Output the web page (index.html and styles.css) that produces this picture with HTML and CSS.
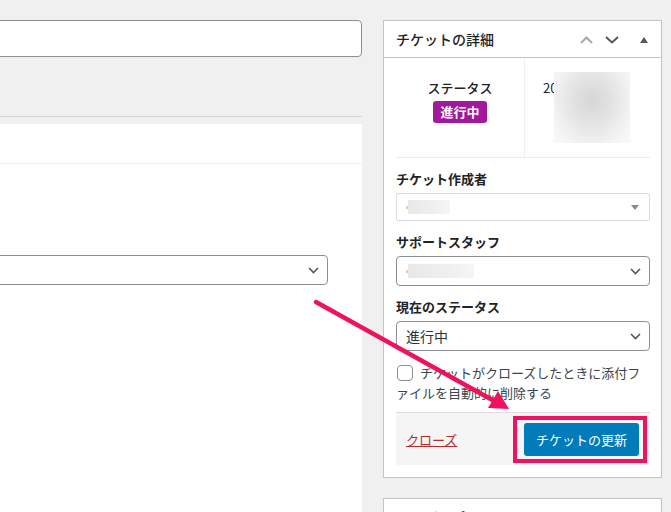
FILE: index.html
```html
<!DOCTYPE html>
<html lang="ja">
<head>
  <meta charset="UTF-8" />
  <meta name="viewport" content="width=device-width, initial-scale=1" />
  <title>チケットの詳細</title>
  <link rel="stylesheet" href="styles.css">
</head>
<body>
  <div class="layout">
    <div class="main-col">
      <div class="title-input"></div>
      <hr class="sep">
      <div class="panel">
        <div class="panel-head"></div>
        <div class="panel-body">
          <div class="select">
            <span></span>
            <svg class="chev" width="11" height="7" viewBox="0 0 11 7"><polyline points="1,1 5.5,5.5 10,1" fill="none" stroke="#50575e" stroke-width="1.6"/></svg>
          </div>
        </div>
      </div>
    </div>

    <div class="side-col">
      <div class="postbox">
        <div class="postbox-head">
          <h2>チケットの詳細</h2>
          <div class="head-tools">
            <svg width="13" height="8" viewBox="0 0 13 8"><polyline points="1,7 6.5,1.5 12,7" fill="none" stroke="#a7aaad" stroke-width="2"/></svg>
            <svg width="14" height="8" viewBox="0 0 14 8"><polyline points="1,1 7,6.5 13,1" fill="none" stroke="#50575e" stroke-width="2"/></svg>
            <svg class="toggle" width="8" height="6" viewBox="0 0 8 6"><polygon points="0,6 4,0 8,6" fill="#50575e"/></svg>
          </div>
        </div>
        <div class="postbox-inside">
          <div class="status-grid">
            <div class="status-cell">
              <div>ステータス</div>
              <span class="badge">進行中</span>
            </div>
            <div class="date-cell">
              <span class="date-text">20</span>
              <span class="blurred"></span>
            </div>
          </div>

          <div class="field">
            <label>チケット作成者</label>
            <div class="select select-light">
              <span class="dot"></span><span class="blur-name short"></span>
              <svg class="tri" width="8" height="5" viewBox="0 0 8 5"><polygon points="0,0 8,0 4,5" fill="#888"/></svg>
            </div>
          </div>

          <div class="field">
            <label>サポートスタッフ</label>
            <div class="select">
              <span class="dot"></span><span class="blur-name"></span>
              <svg class="chev" width="11" height="7" viewBox="0 0 11 7"><polyline points="1,1 5.5,5.5 10,1" fill="none" stroke="#50575e" stroke-width="1.6"/></svg>
            </div>
          </div>

          <div class="field">
            <label>現在のステータス</label>
            <div class="select">
              <span class="select-text">進行中</span>
              <svg class="chev" width="11" height="7" viewBox="0 0 11 7"><polyline points="1,1 5.5,5.5 10,1" fill="none" stroke="#50575e" stroke-width="1.6"/></svg>
            </div>
          </div>

          <p class="check-row"><span class="checkbox"></span>チケットがクローズしたときに添付ファイルを自動的に削除する</p>

          <div class="box-footer">
            <a href="#" class="close-link">クローズ</a>
            <span class="highlight"><button class="btn-primary">チケットの更新</button></span>
          </div>
        </div>
      </div>

      <div class="postbox">
        <div class="postbox-head">
          <h2>ユーザープロフィール</h2>
        </div>
      </div>
    </div>
  </div>

  <!-- annotation arrow -->
  <svg class="annot" width="671" height="512" viewBox="0 0 671 512">
    <line x1="316" y1="302" x2="496" y2="402" stroke="#ee1260" stroke-width="4.5" stroke-linecap="round"/>
    <polygon points="509,409 488,408 498,391" fill="#ee1260"/>
  </svg>
</body>
</html>
```

FILE: styles.css
```css
body {
  margin: 0;
  background-color: #f0f0f1;
  font-family: "Noto Sans CJK JP", "Noto Sans", sans-serif;
  font-size: 13px;
  color: #1d2327;
  overflow: hidden;
}
.layout {
  display: grid;
  grid-template-columns: 382px 279px;
  column-gap: 21px;
  margin-left: -20px;
  padding-top: 20px;
}
.title-input {
  height: 37px;
  box-sizing: border-box;
  background: #fff;
  border: 1px solid #8c8f94;
  border-radius: 4px;
}
.sep {
  margin: 59px 0 0 0;
  border: none;
  border-top: 1px solid #d3d4d6;
}
.panel {
  margin-top: 7px;
  background: #fff;
  height: 420px;
}
.panel-head {
  height: 39px;
  border-bottom: 1px solid #f0f0f1;
}
.panel-body {
  padding: 91px 34px 0 0;
}

.postbox {
  background: #fff;
  border: 1px solid #c3c4c7;
  margin-bottom: 20px;
}
.postbox-head {
  display: flex;
  align-items: center;
  justify-content: space-between;
  height: 36px;
  border-bottom: 1px solid #c3c4c7;
  padding: 0 13px 0 12px;
}
.postbox-head h2 {
  margin: 0;
  font-size: 14px;
  font-weight: 500;
  color: #1d2327;
  line-height: 36px;
}
.head-tools {
  display: flex;
  align-items: center;
  margin-top: 1px;
}
.head-tools svg {
  margin-left: 12px;
}
.head-tools .toggle {
  margin-left: 21px;
}
.postbox-inside {
  padding: 0 11px 12px 12px;
}
.status-grid {
  display: grid;
  grid-template-columns: 128px 1fr;
  height: 100px;
  box-sizing: border-box;
  border-bottom: 1px solid #ececec;
}
.status-cell {
  text-align: center;
  padding-top: 21px;
  line-height: 18px;
  font-weight: 500;
}
.badge {
  display: inline-block;
  margin-top: 4px;
  padding: 0 7px;
  height: 22px;
  line-height: 22px;
  background: #a0189b;
  color: #fff;
  font-weight: bold;
  border-radius: 3px;
}
.date-cell {
  display: flex;
  align-items: flex-start;
  border-left: 1px solid #f0f0f1;
  padding: 14px 0 0 18px;
}
.date-text {
  margin-top: 7px;
  line-height: 18px;
}
.blurred {
  width: 76px;
  height: 71px;
  margin-left: -3px;
  background: radial-gradient(ellipse at 50% 40%, #d6d6d6 0%, #e4e4e4 40%, #f3f3f3 75%, #fafafa 100%);
}

.field {
  margin-top: 12px;
}
.field label {
  display: block;
  font-weight: bold;
  line-height: 18px;
  margin-bottom: 5px;
  color: #1d2327;
}
.select {
  display: flex;
  align-items: center;
  height: 30px;
  box-sizing: border-box;
  background: #fff;
  border: 1px solid #8c8f94;
  border-radius: 4px;
  padding: 0 8px 0 9px;
}
.select .chev {
  margin-left: auto;
}
.select-light {
  height: 28px;
  border-color: #dcdcde;
  border-radius: 2px;
}
.select .tri {
  margin-left: auto;
  margin-right: 2px;
}
.select-text {
  font-size: 14px;
  color: #2c3338;
}
.dot {
  width: 2px;
  height: 3px;
  background: #f2c88c;
}
.blur-name {
  width: 66px;
  height: 14px;
  background: linear-gradient(90deg, #e8e8e8, #efefef 60%, #f6f6f6);
}
.blur-name.short {
  width: 42px;
}
.check-row {
  margin: 12px 0 0 0;
  line-height: 20px;
  color: #3c434a;
}
.checkbox {
  display: inline-block;
  width: 16px;
  height: 16px;
  box-sizing: border-box;
  border: 1px solid #8c8f94;
  border-radius: 4px;
  vertical-align: -3px;
  margin: 0 7px 0 1px;
  background: #fff;
}
.box-footer {
  display: flex;
  align-items: center;
  justify-content: space-between;
  margin-top: 9px;
  height: 53px;
  box-sizing: border-box;
  border-top: 1px solid #dcdcde;
  background: #f5f5f5;
  padding: 0 3px 0 10px;
}
.close-link {
  color: #b32d2e;
  text-decoration: underline;
}
.highlight {
  display: inline-block;
  padding: 3px 4px 3px 7px;
  border: 4px solid #ee1260;
}
.btn-primary {
  display: block;
  height: 33px;
  padding: 0 12px;
  border: none;
  border-radius: 3px;
  background: #007cba;
  color: #fff;
  font-family: inherit;
  font-size: 13px;
  cursor: pointer;
}
.annot {
  position: absolute;
  left: 0;
  top: 0;
  pointer-events: none;
}
```
